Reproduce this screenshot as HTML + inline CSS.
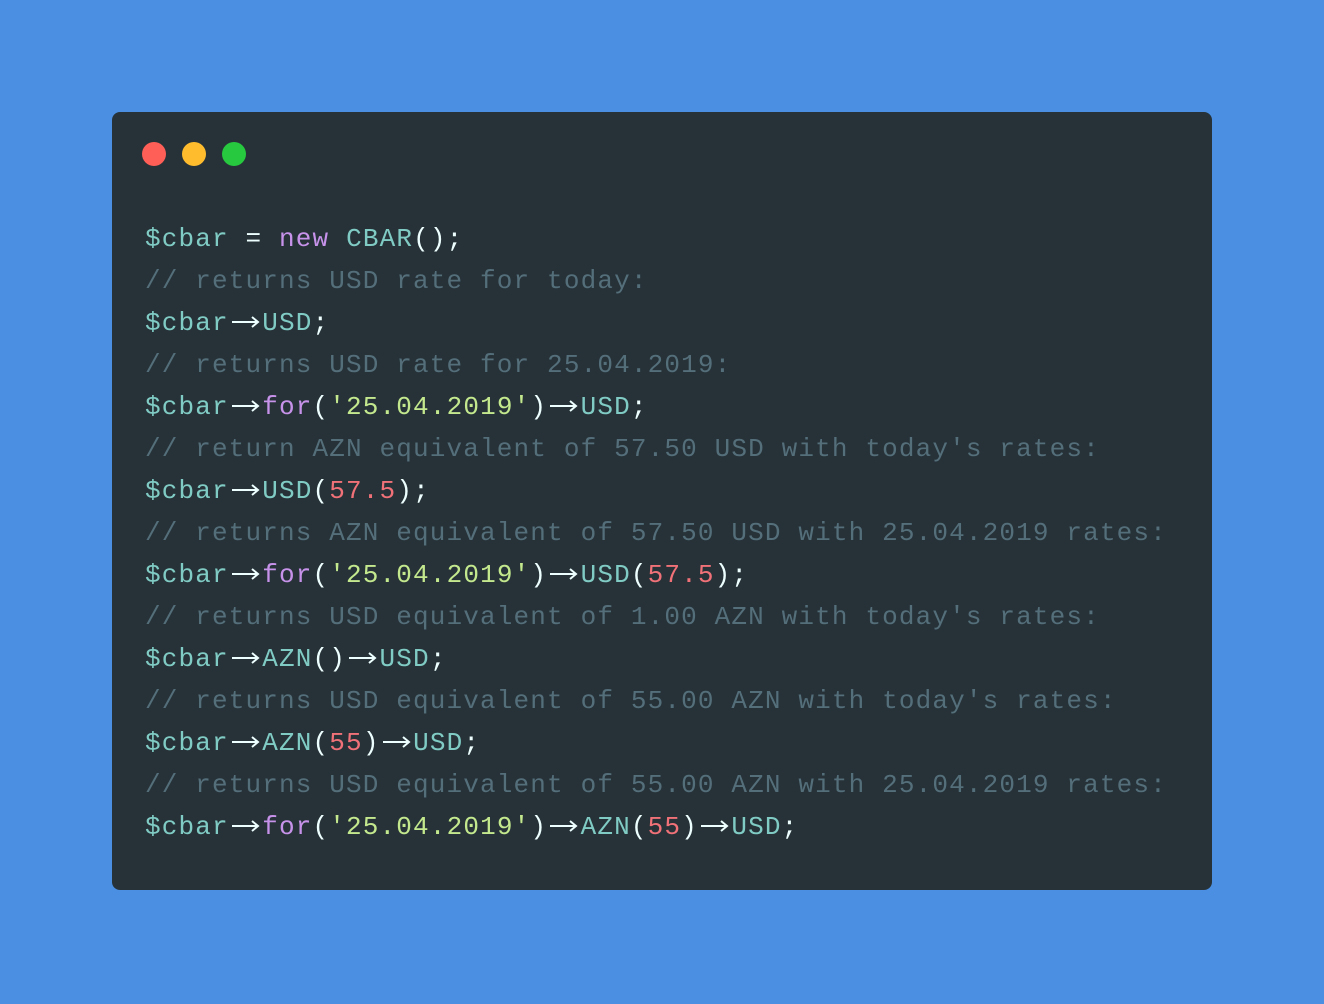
<!DOCTYPE html>
<html><head><meta charset="utf-8"><style>
html,body{margin:0;padding:0}
body{width:1324px;height:1004px;background:#4a8fe2;position:relative;overflow:hidden}
.win{position:absolute;left:112px;top:112px;width:1100px;height:778px;background:#263238;border-radius:8px}
.dot{position:absolute;top:30px;width:24px;height:24px;border-radius:50%}
pre{position:absolute;left:33px;top:106px;margin:0;font-family:"Liberation Mono","DejaVu Sans Mono",monospace;font-size:26px;letter-spacing:1.15px;line-height:42px;color:#eeffff}
.v{color:#80cbc4}.k{color:#c792ea}.s{color:#c3e88d}.n{color:#f07178}.c{color:#546e7a}
svg.a{width:33.5px;height:14px;vertical-align:0;display:inline-block}
</style></head><body>
<svg width="0" height="0" style="position:absolute"><defs><symbol id="ar" viewBox="0 0 33.5 14"><path d="M3 6H29M23 1L29 6L23 11" fill="none" stroke="#eeffff" stroke-width="2"/></symbol></defs></svg>
<div class="win">
<div class="dot" style="left:30px;background:#ff5f56"></div>
<div class="dot" style="left:70px;background:#ffbd2e"></div>
<div class="dot" style="left:110px;background:#27c93f"></div>
<pre><span class="v">$cbar</span> = <span class="k">new</span> <span class="v">CBAR</span>();
<span class="c">// returns USD rate for today:</span>
<span class="v">$cbar</span><svg class="a"><use href="#ar"/></svg><span class="v">USD</span>;
<span class="c">// returns USD rate for 25.04.2019:</span>
<span class="v">$cbar</span><svg class="a"><use href="#ar"/></svg><span class="k">for</span>(<span class="s">'25.04.2019'</span>)<svg class="a"><use href="#ar"/></svg><span class="v">USD</span>;
<span class="c">// return AZN equivalent of 57.50 USD with today's rates:</span>
<span class="v">$cbar</span><svg class="a"><use href="#ar"/></svg><span class="v">USD</span>(<span class="n">57.5</span>);
<span class="c">// returns AZN equivalent of 57.50 USD with 25.04.2019 rates:</span>
<span class="v">$cbar</span><svg class="a"><use href="#ar"/></svg><span class="k">for</span>(<span class="s">'25.04.2019'</span>)<svg class="a"><use href="#ar"/></svg><span class="v">USD</span>(<span class="n">57.5</span>);
<span class="c">// returns USD equivalent of 1.00 AZN with today's rates:</span>
<span class="v">$cbar</span><svg class="a"><use href="#ar"/></svg><span class="v">AZN</span>()<svg class="a"><use href="#ar"/></svg><span class="v">USD</span>;
<span class="c">// returns USD equivalent of 55.00 AZN with today's rates:</span>
<span class="v">$cbar</span><svg class="a"><use href="#ar"/></svg><span class="v">AZN</span>(<span class="n">55</span>)<svg class="a"><use href="#ar"/></svg><span class="v">USD</span>;
<span class="c">// returns USD equivalent of 55.00 AZN with 25.04.2019 rates:</span>
<span class="v">$cbar</span><svg class="a"><use href="#ar"/></svg><span class="k">for</span>(<span class="s">'25.04.2019'</span>)<svg class="a"><use href="#ar"/></svg><span class="v">AZN</span>(<span class="n">55</span>)<svg class="a"><use href="#ar"/></svg><span class="v">USD</span>;</pre>
</div>
</body></html>
